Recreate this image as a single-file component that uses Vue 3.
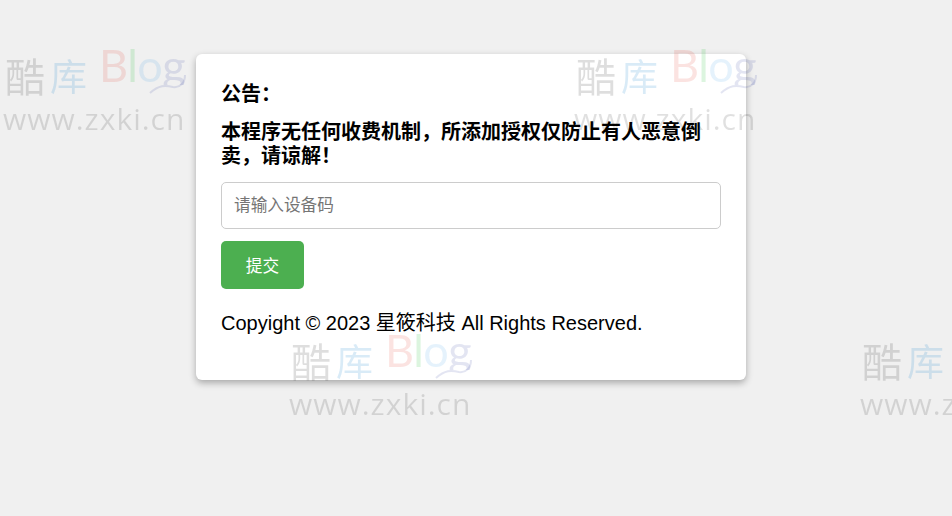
<template>
    <div class="page">
        <div class="card">
            <h3 class="notice-title">公告：</h3>
            <h3 class="notice-text">本程序无任何收费机制，所添加授权仅防止有人恶意倒卖，请谅解！</h3>
            <input type="text" class="code-input" placeholder="请输入设备码"/>
            <button class="submit-btn">提交</button>
            <p class="copyright">Copyight © 2023 星筱科技 All Rights Reserved.</p>
        </div>

        <!-- 워터마크: 카드 위에 겹쳐서 반복 -->
        <div class="watermark-layer">
            <div v-for="mark in marks" :key="mark.id" class="watermark" :style="{ left: mark.x + 'px', top: mark.y + 'px' }">
                <div class="mark-top">
                    <span class="mark-cjk gray">酷</span>
                    <span class="mark-cjk blue">库</span>
                    <span class="mark-blog">
                        <span class="pink">B</span><span class="green">l</span><span class="sky">o</span><span class="violet">g</span>
                    </span>
                    <svg class="swoosh" width="50" height="30" viewBox="0 0 50 30">
                        <path d="M40 5C40 13 35 18 28 17C20 15 14 15 5 23" fill="none" stroke="rgba(60,70,160,.14)" stroke-width="2"/>
                    </svg>
                </div>
                <div class="mark-url">www.zxki.cn</div>
            </div>
        </div>
    </div>
</template>

<script setup>
import { ref } from 'vue';

const marks = ref([
    {id:0, x:5, y:50},
    {id:1, x:576, y:50},
    {id:2, x:291, y:335},
    {id:3, x:862, y:335},
]);
</script>

<style>
body {
    background: #f0f0f0;
}
</style>

<style scoped>
.page {
    position: relative;
    height: 516px;
    overflow: hidden;
    box-sizing: border-box;
    padding: 54px 10px 0 0;
    display: flex;
    justify-content: center;
    align-items: flex-start;
    background: #f0f0f0;
    color: #000;
    font-family: "Liberation Sans", "Noto Sans CJK SC", sans-serif;
}

.card {
    width: 550px;
    height: 326px;
    box-sizing: border-box;
    padding: 28px 25px 0;
    display: flex;
    flex-direction: column;
    align-items: flex-start;
    background: #fff;
    border-radius: 6px;
    box-shadow: 0 3px 7px rgba(0, 0, 0, .3);
}

.notice-title,
.notice-text {
    margin: 0;
    font-size: 20px;
    font-weight: bold;
    line-height: 24px;
}

.notice-title {
    margin-bottom: 14px;
}

.notice-text {
    margin-bottom: 14px;
}

.code-input {
    width: 100%;
    height: 47px;
    box-sizing: border-box;
    padding: 0 12px;
    border: 1px solid #ccc;
    border-radius: 5px;
    outline: none;
    font-family: inherit;
    font-size: 16.67px;
    margin-bottom: 12px;
}

.code-input::placeholder {
    color: #757575;
}

.submit-btn {
    width: 83px;
    height: 48px;
    padding: 0;
    border: none;
    border-radius: 5px;
    background: #4caf50;
    color: #fff;
    font-family: inherit;
    font-size: 16.67px;
}

.copyright {
    margin: 22px 0 0;
    font-size: 20px;
    line-height: 24px;
}

.watermark-layer {
    position: absolute;
    inset: 0;
    pointer-events: none;
}

.watermark {
    position: absolute;
    width: 190px;
    filter: blur(.6px);
}

.mark-top {
    position: relative;
    display: flex;
    align-items: center;
    height: 50px;
}

.mark-cjk {
    width: 45px;
    font-family: "Noto Sans CJK SC", sans-serif;
    font-size: 40px;
    line-height: 50px;
}

.mark-cjk.blue {
    font-size: 37px;
}

.mark-blog {
    align-self: flex-start;
    margin-left: 4px;
    margin-top: -10px;
    font-family: "Lato", sans-serif;
    font-size: 45px;
    line-height: 50px;
    letter-spacing: -.5px;
    clip-path: inset(0 0 5px 0);
}

.swoosh {
    position: absolute;
    left: 140px;
    top: 20px;
}

.mark-url {
    margin: 1px 0 0 -2px;
    font-family: "Open Sans", sans-serif;
    font-size: 30px;
    line-height: 36px;
    letter-spacing: 1px;
    color: rgba(0, 0, 0, .12);
}

.gray { color: rgba(0, 0, 0, .13); }
.blue { color: rgba(0, 120, 200, .15); }
.pink { color: rgba(230, 60, 40, .14); }
.green { color: rgba(60, 200, 80, .18); }
.sky { color: rgba(40, 150, 230, .12); }
.violet { color: rgba(60, 70, 160, .14); }
</style>
